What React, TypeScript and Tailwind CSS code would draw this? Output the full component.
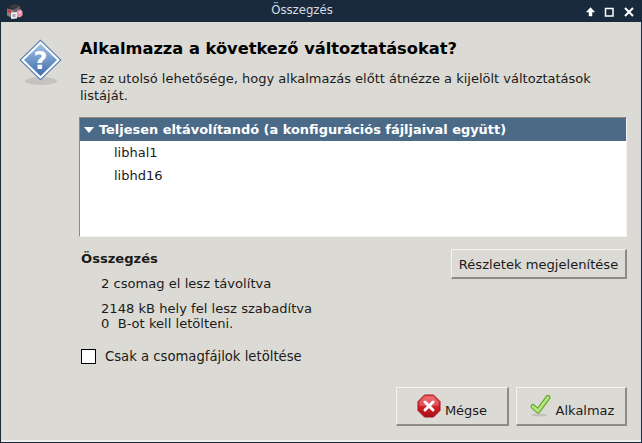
const font = { fontFamily: '"DejaVu Sans", sans-serif' };

const Raised = ({ className, children }: { className: string; children: React.ReactNode }) => (
  <button className={`flex items-center justify-center border border-t-[#f4f3f1] border-l-[#f4f3f1] border-r-2 border-b-2 border-r-[#8f8b82] border-b-[#8f8b82] bg-[#dcdad5] text-[#1a1a1a] ${className}`}>
    {children}
  </button>
);

const AppIcon = () => (
  <svg width="17" height="17" viewBox="0 0 17 17">
    <path d="M3 3.500 9 .5l5 2.500-6 3.500z" fill="#3c3a3c" />
    <path d="M1 5.500 8 7v9l-7-3.500z" fill="#8a7f7c" />
    <path d="M1.500 6 5 7v3L1.500 9z" fill="#b8423c" />
    <path d="M8 6.500 14 3v5l-6 3z" fill="#6a6466" />
    <path d="M5 9.500 11 9v6.500l-6 .5z" fill="#eceaf0" />
    <rect x="6.500" y="11" width="3" height="3" fill="#a8a8b4" />
    <path d="M11 7.500 15 6.500l1.500 2v4L14 14.500l-3-.5z" fill="#eb94a6" />
    <rect x="13" y="8.500" width="2" height="2" fill="#f8d8de" />
  </svg>
);

const QuestionIcon = () => (
  <svg width="44" height="48" viewBox="0 0 44 48">
    <defs>
      <linearGradient id="q" x1="0" y1="0" x2="0" y2="1">
        <stop offset="0" stopColor="#a4c0e0" />
        <stop offset="0.5" stopColor="#6f98c8" />
        <stop offset="1" stopColor="#3c6ca6" />
      </linearGradient>
    </defs>
    <ellipse cx="22" cy="42" rx="16" ry="4" fill="#000" opacity="0.1" />
    <path d="M21.500 .5 42.500 21 21.500 41.500 .5 21z" fill="#4a78b0" />
    <path d="M21.500 2 41 21 21.500 40 2 21z" fill="#fff" />
    <path d="M21.500 5 38 21 21.500 37 5 21z" fill="url(#q)" />
    <text x="21.500" y="29.500" textAnchor="middle" fontSize="24" fontWeight="700" fill="#fff" style={font}>?</text>
  </svg>
);

const CancelIcon = () => (
  <svg width="24" height="24" viewBox="0 0 24 24">
    <defs>
      <linearGradient id="c" x1="0" y1="0" x2="0" y2="1">
        <stop offset="0" stopColor="#ee5058" />
        <stop offset="0.5" stopColor="#d4202a" />
        <stop offset="1" stopColor="#a80f18" />
      </linearGradient>
    </defs>
    <path d="M7.500 1h9L23 7.500v9L16.500 23h-9L1 16.500v-9z" fill="url(#c)" stroke="#a3151d" />
    <path d="M8 2.500h8L21.500 8v4h-19V8z" fill="#fff" opacity="0.2" />
    <path d="m8 8 8 8m0-8-8 8" stroke="#fff" strokeWidth="3" strokeLinecap="round" />
  </svg>
);

const CheckIcon = () => (
  <svg width="24" height="24" viewBox="0 0 24 24">
    <ellipse cx="11" cy="21" rx="8" ry="1.500" fill="#000" opacity="0.12" />
    <path d="M5 12.500 10 17 20 3.500" fill="none" stroke="#62a332" strokeWidth="5" strokeLinecap="round" strokeLinejoin="round" />
    <path d="M5 12.500 10 17 20 3.500" fill="none" stroke="#b4e87a" strokeWidth="2.800" strokeLinecap="round" strokeLinejoin="round" />
  </svg>
);

export default function App() {
  return (
    <div className="flex h-[443px] w-[642px] flex-col overflow-hidden bg-[#1a2a3d]" style={font}>
      <div className="flex h-[22px] shrink-0 items-center pl-[6px] pr-[7px]">
        <AppIcon />
        <div className="flex-1 pr-[4px] text-center text-[11.7px] text-[#d8dce2]">Összegzés</div>
        <div className="flex items-center gap-[7px] text-white">
          <svg width="12" height="12" viewBox="0 0 12 12">
            <path d="M5.500 2.500 1.500 7h2.500v4h3V7h2.500z" fill="#fff" stroke="#fff" strokeWidth="0.500" strokeLinejoin="round" />
          </svg>
          <svg width="12" height="12" viewBox="0 0 12 12">
            <rect x="1.500" y="3.500" width="7.500" height="7.500" fill="none" stroke="#fff" strokeWidth="1.500" />
          </svg>
          <svg width="12" height="12" viewBox="0 0 12 12">
            <path d="m2 3 8 8m0-8-8 8" stroke="#fff" strokeWidth="2" />
          </svg>
        </div>
      </div>

      <div className="mx-px mb-px flex flex-1 flex-col border-b-2 border-[#f0efec] bg-[#dcdad5] pb-[14px] pl-[18px] pr-[14px] pt-[17px] text-[#1a1a1a]">
        <div className="flex">
          <div className="w-[61px] shrink-0">
            <QuestionIcon />
          </div>
          <div className="flex-1">
            <h1 className="text-[16.25px] font-bold leading-[20px] text-black">Alkalmazza a következő változtatásokat?</h1>
            <p className="mt-[11px] text-[13px] leading-[17px]">
              Ez az utolsó lehetősége, hogy alkalmazás előtt átnézze a kijelölt változtatások listáját.
            </p>
          </div>
        </div>

        <div className="ml-[60px] mt-[13px] h-[120px] border border-b-[#f4f3f1] border-l-[#8f8b82] border-r-[#f4f3f1] border-t-[#8f8b82] bg-white">
          <div className="flex h-[23px] items-center bg-[#4b6a88] pl-[3px] text-[12.93px] font-bold text-white">
            <svg width="12" height="8" viewBox="0 0 12 8" className="mr-[4px]">
              <path d="M1 1h10L6 7z" fill="#fff" />
            </svg>
            Teljesen eltávolítandó (a konfigurációs fájljaival együtt)
          </div>
          <div className="pl-[34px] text-[13px] text-[#1a1a1a]">
            <div className="h-[23px] leading-[23px]">libhal1</div>
            <div className="h-[23px] leading-[23px]">libhd16</div>
          </div>
        </div>

        <div className="ml-[62px] mt-[12px] flex justify-between">
          <div className="mt-[2px] text-[13.1px] leading-[16px]">
            <div className="font-bold">Összegzés</div>
            <div className="ml-[20px] mt-[9px]">2 csomag el lesz távolítva</div>
            <div className="ml-[20px] mt-[9px]">2148 kB hely fel lesz szabadítva</div>
            <div className="ml-[20px] -mt-px">0 &nbsp;B-ot kell letölteni.</div>
          </div>
          <Raised className="h-[30px] w-[176px] pt-[2px] text-[13.1px]">Részletek megjelenítése</Raised>
        </div>

        <div className="ml-[62px] mt-[17px] flex h-[15px] items-center text-[13.2px]">
          <span className="mr-[9px] h-[15px] w-[15px] border border-black bg-white" />
          Csak a csomagfájlok letöltése
        </div>

        <div className="mt-auto flex justify-end gap-[7px]">
          <Raised className="h-[39px] w-[113px] gap-[4px] text-[13px]">
            <CancelIcon />
            <span className="pt-[9px]">Mégse</span>
          </Raised>
          <Raised className="h-[39px] w-[111px] gap-[4px] text-[13px]">
            <CheckIcon />
            <span className="pt-[9px]">Alkalmaz</span>
          </Raised>
        </div>
      </div>
    </div>
  );
}
